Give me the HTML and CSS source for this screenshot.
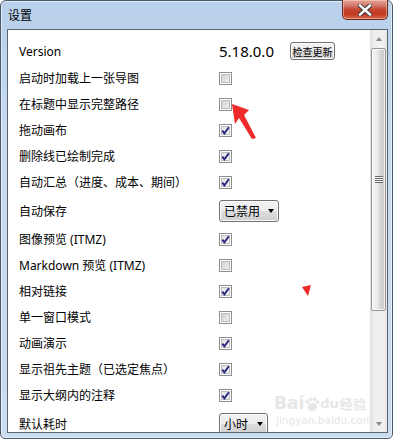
FILE: index.html
```html
<!DOCTYPE html>
<html lang="zh-CN">
<head>
  <meta charset="UTF-8">
  <title>设置</title>
  <link rel="stylesheet" href="styles.css">
</head>
<body>
  <div class="window">
    <div class="titlebar">
      <span class="title">设置</span>
      <button class="close">
        <svg width="14" height="12" viewBox="0 0 14 12">
          <path d="M2 1.5 L12 10.5 M12 1.5 L2 10.5" stroke="#3b3b3b" stroke-width="4.4" stroke-linecap="square"/>
          <path d="M2 1.5 L12 10.5 M12 1.5 L2 10.5" stroke="#ffffff" stroke-width="2.4" stroke-linecap="square"/>
        </svg>
      </button>
    </div>

    <div class="client">
      <div class="settings">
        <div class="row version">
          <span class="label">Version</span>
          <span class="value">5.18.0.0</span>
          <button class="btn">检查更新</button>
        </div>
        <div class="row"><span class="label">启动时加载上一张导图</span><span class="cb"></span></div>
        <div class="row"><span class="label">在标题中显示完整路径</span><span class="cb"></span></div>
        <div class="row"><span class="label">拖动画布</span><span class="cb checked"><svg width="9" height="9" viewBox="0 0 9 9"><path d="M1.3 4.6 L3.4 7.3 L7.8 1.2" fill="none" stroke="#26267e" stroke-width="1.9"/></svg></span></div>
        <div class="row"><span class="label">删除线已绘制完成</span><span class="cb checked"><svg width="9" height="9" viewBox="0 0 9 9"><path d="M1.3 4.6 L3.4 7.3 L7.8 1.2" fill="none" stroke="#26267e" stroke-width="1.9"/></svg></span></div>
        <div class="row"><span class="label">自动汇总（进度、成本、期间）</span><span class="cb checked"><svg width="9" height="9" viewBox="0 0 9 9"><path d="M1.3 4.6 L3.4 7.3 L7.8 1.2" fill="none" stroke="#26267e" stroke-width="1.9"/></svg></span></div>
        <div class="row tall">
          <span class="label">自动保存</span>
          <span class="combo wide">已禁用<span class="caret"></span></span>
        </div>
        <div class="row"><span class="label">图像预览 (ITMZ)</span><span class="cb checked"><svg width="9" height="9" viewBox="0 0 9 9"><path d="M1.3 4.6 L3.4 7.3 L7.8 1.2" fill="none" stroke="#26267e" stroke-width="1.9"/></svg></span></div>
        <div class="row"><span class="label">Markdown 预览 (ITMZ)</span><span class="cb"></span></div>
        <div class="row"><span class="label">相对链接</span><span class="cb checked"><svg width="9" height="9" viewBox="0 0 9 9"><path d="M1.3 4.6 L3.4 7.3 L7.8 1.2" fill="none" stroke="#26267e" stroke-width="1.9"/></svg></span></div>
        <div class="row"><span class="label">单一窗口模式</span><span class="cb"></span></div>
        <div class="row"><span class="label">动画演示</span><span class="cb checked"><svg width="9" height="9" viewBox="0 0 9 9"><path d="M1.3 4.6 L3.4 7.3 L7.8 1.2" fill="none" stroke="#26267e" stroke-width="1.9"/></svg></span></div>
        <div class="row"><span class="label">显示祖先主题（已选定焦点）</span><span class="cb checked"><svg width="9" height="9" viewBox="0 0 9 9"><path d="M1.3 4.6 L3.4 7.3 L7.8 1.2" fill="none" stroke="#26267e" stroke-width="1.9"/></svg></span></div>
        <div class="row"><span class="label">显示大纲内的注释</span><span class="cb checked"><svg width="9" height="9" viewBox="0 0 9 9"><path d="M1.3 4.6 L3.4 7.3 L7.8 1.2" fill="none" stroke="#26267e" stroke-width="1.9"/></svg></span></div>
        <div class="row tall">
          <span class="label">默认耗时</span>
          <span class="combo narrow">小时<span class="caret"></span></span>
        </div>
      </div>

      <div class="scrollbar">
        <div class="arrow"><span class="tri up"></span></div>
        <div class="track">
          <div class="thumb"><span class="grip"></span></div>
        </div>
        <div class="arrow"><span class="tri down"></span></div>
      </div>

      <div class="watermark">
        <div class="wm-logo">
          <span class="wm-bai">Bai</span><svg width="16" height="17" viewBox="0 0 20 18"><g fill="#e6e6e6"><circle cx="4" cy="6" r="2.5"/><circle cx="8" cy="2.5" r="2.3"/><circle cx="13" cy="2.5" r="2.3"/><circle cx="17" cy="6" r="2.5"/><ellipse cx="10.5" cy="12" rx="6" ry="5"/></g></svg><span class="wm-du">du</span><span class="wm-cn">经验</span>
        </div>
        <div class="wm-url">jingyan.baidu.com</div>
      </div>
    </div>

    <svg class="marks" width="395" height="440" viewBox="0 0 395 440">
      <polygon points="232,104 249,110 244,115 256,138 252,139 239,118 235,124" fill="#ee2a2a"/>
      <polygon points="302,287 311,285 308,296" fill="#ee2a2a"/>
    </svg>
  </div>
</body>
</html>
```

FILE: styles.css
```css
body {
  margin: 0;
  background: #ffffff;
  font-family: "Noto Sans", "Noto Sans CJK SC", sans-serif;
  color: #000;
}

.window {
  position: relative;
  width: 393px;
  height: 439px;
  box-sizing: border-box;
  border: 1px solid #4b5a6b;
  border-radius: 6px 6px 5px 5px;
  background: linear-gradient(#b8d0ea, #c6daf0 30%, #cadcf0 100%);
  box-shadow: inset 0 0 0 1px rgba(255, 255, 255, 0.55);
  padding: 0 4px 5px 6px;
  display: flex;
  flex-direction: column;
}

.titlebar {
  height: 28px;
  display: flex;
  justify-content: space-between;
  align-items: flex-start;
}

.title {
  font-size: 12px;
  line-height: 12px;
  margin: 9px 0 0 1px;
}

.close {
  margin-top: -1px;
  width: 46px;
  height: 20px;
  padding: 0;
  border: 1px solid #6b2a20;
  border-top: none;
  border-radius: 0 0 5px 5px;
  background: linear-gradient(#e7a597, #d2786a 30%, #c44630 50%, #c23a22 75%, #d76a50);
  box-shadow: inset 0 0 0 1px rgba(255, 210, 200, 0.5);
  display: flex;
  align-items: center;
  justify-content: center;
}

.client {
  flex: 1;
  display: flex;
  position: relative;
  overflow: hidden;
  border: 1px solid #5d6670;
  background: #ffffff;
}

.settings {
  flex: 1;
  overflow: hidden;
  padding: 7px 0 0 11px;
  font-size: 12px;
}

.row {
  display: flex;
  align-items: center;
  height: 26px;
}

.row.version {
  height: 28px;
}

.row.tall {
  height: 31px;
}

.label {
  width: 200px;
  flex-shrink: 0;
  white-space: nowrap;
}

.value {
  width: 71px;
  font-size: 15px;
}

.btn {
  width: 45px;
  height: 18px;
  padding: 0;
  font-family: inherit;
  font-size: 10px;
  color: #000;
  border: 1px solid #707070;
  border-radius: 3px;
  background: linear-gradient(#f2f2f2, #ebebeb 50%, #dddddd 50%, #cfcfcf);
  box-shadow: inset 0 0 0 1px #fbfbfb;
}

.cb {
  width: 13px;
  height: 13px;
  box-sizing: border-box;
  border: 1px solid #8e8e8e;
  background: linear-gradient(135deg, #c9c9c9, #f7f7f7);
  box-shadow: inset 0 0 0 1px #ffffff, inset 0 0 0 2px #bcbcbc;
  display: flex;
  align-items: center;
  justify-content: center;
}

.cb.checked {
  background: linear-gradient(135deg, #dedede, #fbfbfb);
}

.combo {
  height: 22px;
  box-sizing: border-box;
  display: flex;
  align-items: center;
  justify-content: space-between;
  padding: 0 4px 0 4px;
  border: 1px solid #707070;
  border-radius: 3px;
  background: linear-gradient(#f2f2f2, #ebebeb 50%, #dddddd 50%, #cfcfcf);
  box-shadow: inset 0 0 0 1px #fbfbfb;
  font-size: 12px;
}

.combo.wide {
  width: 60px;
}

.combo.narrow {
  width: 49px;
}

.caret {
  width: 0;
  height: 0;
  border-left: 3.5px solid transparent;
  border-right: 3.5px solid transparent;
  border-top: 4px solid #000;
}

.scrollbar {
  width: 17px;
  display: flex;
  flex-direction: column;
  background: linear-gradient(90deg, #dedede, #efefef 25%, #f0f0f0 75%, #e6e6e6);
}

.arrow {
  height: 17px;
  display: flex;
  align-items: center;
  justify-content: center;
}

.tri {
  width: 0;
  height: 0;
  border-left: 3.5px solid transparent;
  border-right: 3.5px solid transparent;
}

.tri.up {
  border-bottom: 4px solid #8a8a8a;
}

.tri.down {
  border-top: 4px solid #8a8a8a;
}

.track {
  flex: 1;
  padding: 1px 1px 0 1px;
}

.thumb {
  height: 263px;
  box-sizing: border-box;
  border: 1px solid #959595;
  border-radius: 2px;
  background: linear-gradient(90deg, #f4f4f4, #e9e9e9 45%, #d9d9d9 55%, #c9c9c9);
  box-shadow: inset 0 0 0 1px rgba(255, 255, 255, 0.7);
  display: flex;
  align-items: center;
  justify-content: center;
}

.grip {
  width: 8px;
  height: 7px;
  background: repeating-linear-gradient(#6a6a6a 0 1px, #f5f5f5 1px 2px);
}

.watermark {
  position: absolute;
  left: 266px;
  top: 364px;
  color: #e6e6e6;
  pointer-events: none;
}

.wm-logo {
  display: flex;
  align-items: flex-end;
  font-family: "DejaVu Sans", sans-serif;
  font-weight: bold;
  line-height: 19px;
}

.wm-bai {
  font-size: 17px;
}

.wm-du {
  font-size: 13px;
}

.wm-cn {
  margin-left: 1px;
  font-family: "Noto Sans CJK SC", sans-serif;
  font-size: 13px;
}

.wm-url {
  margin-left: 2px;
  font-family: "DejaVu Sans", sans-serif;
  font-size: 10.5px;
  line-height: 14px;
}

.marks {
  position: absolute;
  left: -1px;
  top: -1px;
  pointer-events: none;
}
```
